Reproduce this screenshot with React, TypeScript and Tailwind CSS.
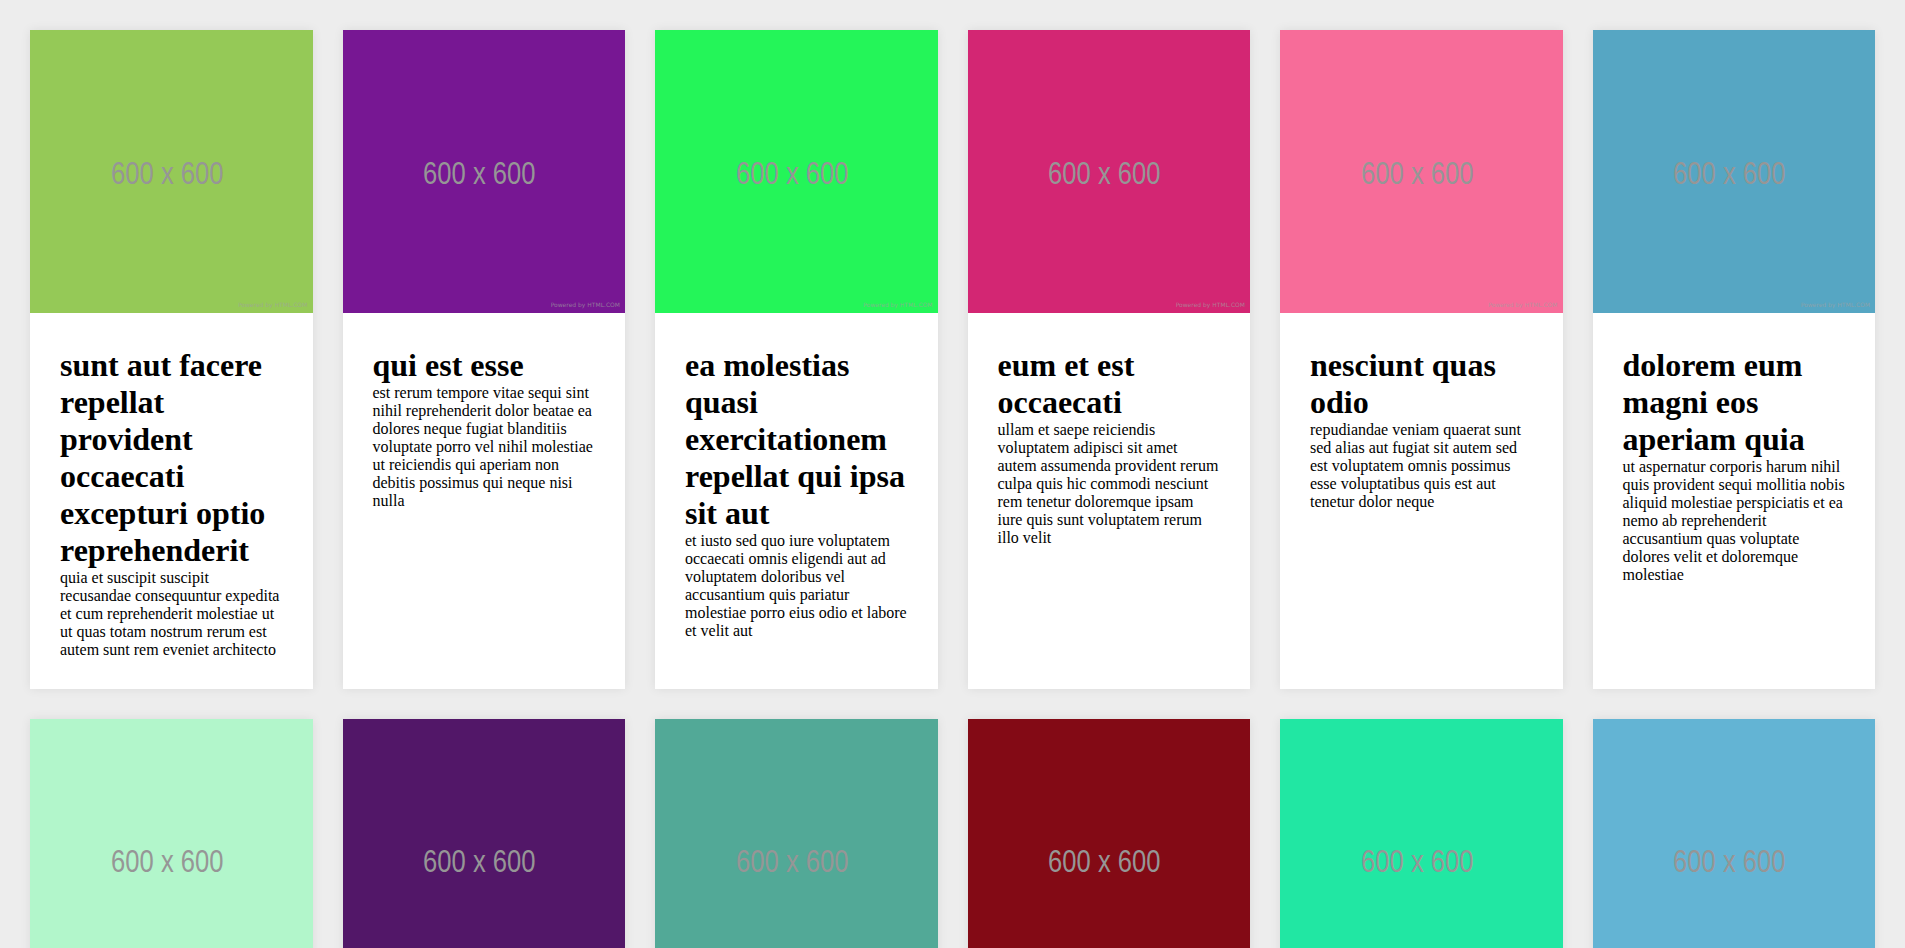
type Post = {
  id: number;
  title: string;
  body: string;
  color: string;
};

// placeholder colours, one per post
const posts: Post[] = [
  {
    id: 1,
    color: "bg-[#95c957]",
    title: "sunt aut facere repellat provident occaecati excepturi optio reprehenderit",
    body: "quia et suscipit suscipit recusandae consequuntur expedita et cum reprehenderit molestiae ut ut quas totam nostrum rerum est autem sunt rem eveniet architecto",
  },
  {
    id: 2,
    color: "bg-[#771793]",
    title: "qui est esse",
    body: "est rerum tempore vitae sequi sint nihil reprehenderit dolor beatae ea dolores neque fugiat blanditiis voluptate porro vel nihil molestiae ut reiciendis qui aperiam non debitis possimus qui neque nisi nulla",
  },
  {
    id: 3,
    color: "bg-[#24f559]",
    title: "ea molestias quasi exercitationem repellat qui ipsa sit aut",
    body: "et iusto sed quo iure voluptatem occaecati omnis eligendi aut ad voluptatem doloribus vel accusantium quis pariatur molestiae porro eius odio et labore et velit aut",
  },
  {
    id: 4,
    color: "bg-[#d32673]",
    title: "eum et est occaecati",
    body: "ullam et saepe reiciendis voluptatem adipisci sit amet autem assumenda provident rerum culpa quis hic commodi nesciunt rem tenetur doloremque ipsam iure quis sunt voluptatem rerum illo velit",
  },
  {
    id: 5,
    color: "bg-[#f76c99]",
    title: "nesciunt quas odio",
    body: "repudiandae veniam quaerat sunt sed alias aut fugiat sit autem sed est voluptatem omnis possimus esse voluptatibus quis est aut tenetur dolor neque",
  },
  {
    id: 6,
    color: "bg-[#56a6c3]",
    title: "dolorem eum magni eos aperiam quia",
    body: "ut aspernatur corporis harum nihil quis provident sequi mollitia nobis aliquid molestiae perspiciatis et ea nemo ab reprehenderit accusantium quas voluptate dolores velit et doloremque molestiae",
  },
  {
    id: 7,
    color: "bg-[#b2f6cb]",
    title: "magnam facilis autem",
    body: "dolore placeat quibusdam ea quo vitae magni quis enim qui quis quo nemo aut saepe quidem repellat excepturi ut quia sunt ut sequi eos ea sed quas",
  },
  {
    id: 8,
    color: "bg-[#521768]",
    title: "dolorem dolore est ipsam",
    body: "dignissimos aperiam dolorem qui eum facilis quibusdam animi sint suscipit qui sint possimus cum quaerat magni maiores excepturi ipsam ut commodi dolor voluptatum modi aut vitae",
  },
  {
    id: 9,
    color: "bg-[#52a997]",
    title: "nesciunt iure omnis dolorem tempora et accusantium",
    body: "consectetur animi nesciunt iure dolore enim quia ad veniam autem ut quam aut nobis et est aut quod aut provident voluptas autem voluptas",
  },
  {
    id: 10,
    color: "bg-[#830a15]",
    title: "optio molestias id quia eum",
    body: "quo et expedita modi cum officia vel magni doloribus qui repudiandae vero nisi sit quos veniam quod sed accusamus veritatis error",
  },
  {
    id: 11,
    color: "bg-[#21e7a3]",
    title: "et ea vero quia laudantium autem",
    body: "delectus reiciendis molestiae occaecati non minima eveniet qui voluptatibus accusamus in eum beatae sit vel qui neque voluptates ut commodi qui incidunt ut animi commodi",
  },
  {
    id: 12,
    color: "bg-[#63b4d4]",
    title: "in quibusdam tempore odit est dolorem",
    body: "itaque id aut magnam praesentium quia et ea odit et ea voluptas et sapiente quia nihil amet occaecati quia id voluptatem incidunt ea est distinctio odio",
  },
];

const Placeholder = ({ color }: { color: string }) => (
  <div className={`relative w-full aspect-square flex justify-center items-center pt-[3px] pr-[8px] ${color}`}>
    <span className="font-['Liberation_Sans',sans-serif] text-[32px] text-[#969696] scale-x-[0.8]">
      600 x 600
    </span>
    {/* watermark */}
    <span className="absolute right-[5px] bottom-[4px] font-['DejaVu_Sans',sans-serif] text-[6px] text-[#a0a0a0]/70">
      Powered by HTML.COM
    </span>
  </div>
);

const App = () => {
  return (
    <div className="min-h-screen bg-[#ededed] p-[30px] font-['Liberation_Serif',serif]">
      <ul className="grid grid-cols-6 gap-[30px]">
        {posts.map((post) => (
          <li key={post.id} className="bg-white shadow-[0_0_10px_rgba(0,0,0,0.08)]">
            <Placeholder color={post.color} />
            <div className="px-[30px] pt-[34px] pb-[30px] text-black">
              <h2 className="text-[32px] font-bold leading-[normal]">{post.title}</h2>
              <p className="text-[16px] leading-[normal]">{post.body}</p>
            </div>
          </li>
        ))}
      </ul>
    </div>
  );
};

export default App;
